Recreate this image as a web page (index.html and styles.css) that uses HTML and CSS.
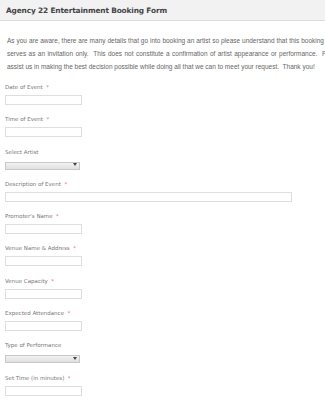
FILE: index.html
```html
<!DOCTYPE html>
<html>
<head>
<meta charset="utf-8">
<link rel="stylesheet" href="styles.css">
</head>
<body>
<div class="header"><h1 class="title">Agency 22 Entertainment Booking Form</h1></div>
<div class="intro">
  <div class="line l1">As you are aware, there are many details that go into booking an artist so please understand that this booking</div>
  <div class="line l2">serves as an invitation only.&nbsp; This does not constitute a confirmation of artist appearance or performance.&nbsp; Please</div>
  <div class="line l3">assist us in making the best decision possible while doing all that we can to meet your request.&nbsp; Thank you!</div>
</div>
<form class="form">
  <div class="field"><label class="lbl">Date of Event<span class="req">*</span></label><input class="inp" type="text"></div>
  <div class="field"><label class="lbl">Time of Event<span class="req">*</span></label><input class="inp" type="text"></div>
  <div class="field"><label class="lbl">Select Artist</label><div class="sel-wrap"><select class="sel"><option></option></select></div></div>
  <div class="field"><label class="lbl">Description of Event<span class="req">*</span></label><input class="inp wide" type="text"></div>
  <div class="field"><label class="lbl">Promoter's Name<span class="req">*</span></label><input class="inp" type="text"></div>
  <div class="field"><label class="lbl">Venue Name &amp; Address<span class="req">*</span></label><input class="inp" type="text"></div>
  <div class="field"><label class="lbl">Venue Capacity<span class="req">*</span></label><input class="inp" type="text"></div>
  <div class="field"><label class="lbl">Expected Attendance<span class="req">*</span></label><input class="inp" type="text"></div>
  <div class="field"><label class="lbl">Type of Performance</label><div class="sel-wrap"><select class="sel"><option></option></select></div></div>
  <div class="field"><label class="lbl">Set Time (in minutes)<span class="req">*</span></label><input class="inp" type="text"></div>
</form>
</body>
</html>
```
FILE: styles.css
```css
html, body {
  margin: 0;
  padding: 0;
  overflow: hidden;
  background: #fff;
}
body {
  width: 325px;
  height: 400px;
}
.header {
  height: 21px;
  background: #f2f2f2;
  border-bottom: 1px solid #dcdcdc;
  box-sizing: border-box;
  padding-left: 6px;
  display: flex;
  align-items: center;
}
.title {
  margin: 0;
  font-family: "DejaVu Sans", sans-serif;
  font-weight: bold;
  font-size: 7.4px;
  letter-spacing: -0.15px;
  color: #444;
  white-space: nowrap;
}
.intro {
  padding: 12.5px 0 0 7px;
  font-family: "Liberation Sans", Arial, sans-serif;
  font-size: 6.5px;
  line-height: 13px;
  color: #666;
  height: 49.5px;
}
.line {
  white-space: nowrap;
}
.l1 {
  width: 317px;
  text-align: justify;
  text-align-last: justify;
}
.l2 {
  width: 335px;
  text-align: justify;
  text-align-last: justify;
}
.form {
  margin: 0;
  padding: 0 0 0 5px;
  display: flex;
  flex-direction: column;
}
.field {
  display: flex;
  flex-direction: column;
  align-items: flex-start;
  height: 32.3px;
}
.lbl {
  font-family: "DejaVu Sans", sans-serif;
  font-size: 5.5px;
  line-height: 8px;
  height: 8px;
  color: #777;
  margin-bottom: 4px;
  white-space: nowrap;
}
.req {
  color: #f26b6b;
  margin-left: 3.5px;
}
.inp {
  box-sizing: border-box;
  width: 77px;
  height: 10px;
  margin: 0;
  padding: 0;
  border: 1px solid #dedede;
  background: #fff;
  outline: none;
}
.inp.wide {
  width: 287px;
}
.sel-wrap {
  position: relative;
  margin-top: 1px;
  width: 75px;
  height: 8px;
}
.sel {
  -webkit-appearance: none;
  appearance: none;
  box-sizing: border-box;
  width: 75px;
  height: 8px;
  margin: 0;
  padding: 0;
  border: 1px solid #c8c8c8;
  border-radius: 0;
  background: linear-gradient(#f2f2f2, #e0e0e0);
}
.sel-wrap::after {
  content: "";
  position: absolute;
  right: 3px;
  top: 2.5px;
  border-left: 2px solid transparent;
  border-right: 2px solid transparent;
  border-top: 3px solid #444;
}
```
